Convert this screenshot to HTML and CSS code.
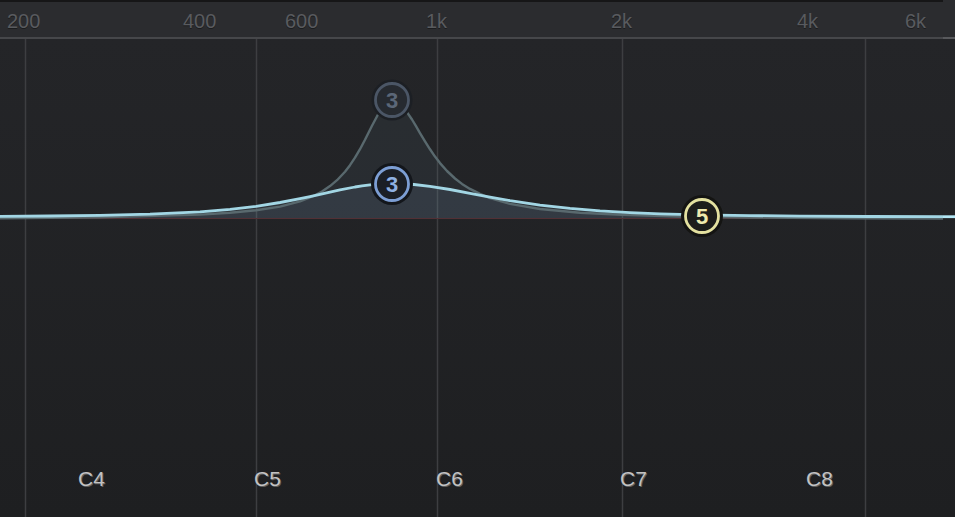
FILE: index.html
```html
<!DOCTYPE html>
<html>
<head>
<meta charset="utf-8">
<title>EQ</title>
<link rel="stylesheet" href="styles.css">
</head>
<body>
<div class="eq">
  <div class="freq-bar">
    <div class="freq-cap"></div>
    <div class="freq-labels">
      <span class="freq" style="left:7px">200</span>
      <span class="freq" style="left:183px">400</span>
      <span class="freq" style="left:285px">600</span>
      <span class="freq" style="left:426px">1k</span>
      <span class="freq" style="left:611px">2k</span>
      <span class="freq" style="left:797px">4k</span>
      <span class="freq" style="left:905px">6k</span>
    </div>
  </div>
  <div class="freq-rule"></div>
  <div class="plot">
    <svg class="graph" viewBox="0 39 955 478" width="955" height="478" xmlns="http://www.w3.org/2000/svg">
      <g class="grid">
        <line x1="25.5" y1="39" x2="25.5" y2="517"/>
        <line x1="256.5" y1="39" x2="256.5" y2="517"/>
        <line x1="437.5" y1="39" x2="437.5" y2="517"/>
        <line x1="622.5" y1="39" x2="622.5" y2="517"/>
        <line x1="865.5" y1="39" x2="865.5" y2="517"/>
      </g>
      <polygon class="ghost-fill" points="0,217.4 100,216.5 200,214.0 230,212.3 256,209.9 280,206.3 300,201.2 315,195.3 322,191.5 330,186.1 337,180.2 345,171.7 350,165.2 355,157.7 360,149.2 365,139.8 372,125.7 380,110.7 386,104 392,100 398,103 404,107.9 412,119.5 416,126.2 420,133.1 425,141.4 430,149.3 435,156.6 440,163.1 447,171 455,178.5 462,183.9 470,188.9 480,193.9 490,197.9 510,203.5 540,208.5 580,212.1 622,214.1 680,215.7 750,216.7 850,217.4 943,217.7 943,218 0,218"/>
      <polygon class="main-fill" points="0,216.4 50,216.0 100,215.4 150,214.2 200,211.8 230,209.4 256,206.3 280,202.5 300,198.7 310,196.6 320,194.3 330,192.1 340,189.9 355,187.0 362,185.9 370,184.8 382,183.8 392,183.5 402,183.7 414,184.5 430,186.3 450,189.5 470,193.3 490,197.1 510,200.6 540,205.1 570,208.4 600,210.9 630,212.6 660,213.8 700,214.8 750,215.6 800,216.1 870,216.5 943,216.7 943,218 0,218"/>
      <line class="zero" x1="0" y1="218.5" x2="943" y2="218.5"/>
      <polyline class="ghost-line" points="0,218.2 100,217.3 200,214.6 230,212.8 256,210.3 280,206.6 300,201.4 315,195.3 322,191.5 330,186.1 337,180.2 345,171.7 350,165.2 355,157.7 360,149.2 365,139.8 372,125.7 380,110.7 386,104 392,100 398,103 404,107.9 412,119.5 416,126.2 420,133.1 425,141.4 430,149.3 435,156.6 440,163.1 447,171 455,178.5 462,183.9 470,188.9 480,193.9 490,198.1 510,203.9 540,209.0 580,212.7 622,214.8 680,216.5 750,217.5 850,218.2 943,218.5"/>
      <polyline class="main-line" points="0,216.4 50,216.0 100,215.4 150,214.2 200,211.8 230,209.4 256,206.3 280,202.5 300,198.7 310,196.6 320,194.3 330,192.1 340,189.9 355,187.0 362,185.9 370,184.8 382,183.8 392,183.5 402,183.7 414,184.5 430,186.3 450,189.5 470,193.3 490,197.1 510,200.6 540,205.1 570,208.4 600,210.9 630,212.6 660,213.8 700,214.8 750,215.6 800,216.1 870,216.5 943,216.7"/>
      <line class="main-tail" x1="943" y1="216.7" x2="955" y2="216.7"/>

      <g class="node node-ghost">
        <circle class="halo" cx="392" cy="100" r="20.5"/>
        <circle class="ring" cx="392" cy="100" r="16.5"/>
        <text x="392" y="108">3</text>
      </g>
      <g class="node node-active">
        <circle class="halo" cx="392" cy="184" r="21"/>
        <circle class="ring" cx="392" cy="184" r="16.5"/>
        <text x="392" y="192">3</text>
      </g>
      <g class="node node-five">
        <circle class="halo" cx="702" cy="216" r="21"/>
        <circle class="ring" cx="702" cy="216" r="16.5"/>
        <text x="702" y="224">5</text>
      </g>
    </svg>
    <span class="note" style="left:78px">C4</span>
    <span class="note" style="left:254px">C5</span>
    <span class="note" style="left:436px">C6</span>
    <span class="note" style="left:620px">C7</span>
    <span class="note" style="left:806px">C8</span>
  </div>
</div>
</body>
</html>
```

FILE: styles.css
```css
html, body {
  margin: 0;
  padding: 0;
  background: #202124;
  overflow: hidden;
}

.eq {
  display: flex;
  flex-direction: column;
  width: 955px;
  height: 517px;
  font-family: "Liberation Sans", Arial, sans-serif;
}

.freq-bar {
  height: 37px;
  background: #2b2c2f;
  display: flex;
  flex-direction: column;
}

.freq-cap {
  height: 2px;
  margin-right: 12px;
  background: #161617;
}

.freq-labels {
  position: relative;
  flex: 1;
}

.freq {
  position: absolute;
  top: 9px;
  font-size: 20px;
  line-height: 20px;
  color: #595b5f;
  text-shadow: 0 1px 0 #1b1c1e;
}

.freq-rule {
  height: 2px;
  background: linear-gradient(to right, #46474a 943px, #58595c 943px);
}

.plot {
  position: relative;
  flex: 1;
  background: linear-gradient(#242528, #1e1f21);
}

.graph {
  position: absolute;
  left: 0;
  top: 0;
  display: block;
}

.grid line {
  stroke: #3d3e41;
  stroke-width: 1.5;
}

.ghost-fill {
  fill: rgba(120, 150, 180, 0.08);
}

.main-fill {
  fill: rgba(120, 150, 180, 0.14);
}

.zero {
  stroke: #523035;
  stroke-width: 1;
}

.ghost-line {
  fill: none;
  stroke: #59696e;
  stroke-width: 2.4;
  stroke-linejoin: round;
}

.main-line {
  fill: none;
  stroke: #a2d6e4;
  stroke-width: 2.8;
  stroke-linejoin: round;
}

.main-tail {
  stroke: #b2e6f4;
  stroke-width: 2.8;
}

.node text {
  font-family: "Liberation Sans", Arial, sans-serif;
  font-size: 22px;
  font-weight: bold;
  text-anchor: middle;
}

.node .ring {
  stroke-width: 2.8;
}

.node-ghost .halo { fill: #1c1f24; }
.node-ghost .ring { fill: #262a30; stroke: #4b5666; }
.node-ghost text { fill: #5b6778; }

.node-active .halo { fill: #13161b; }
.node-active .ring { fill: #1b1f26; stroke: #7c9ed4; }
.node-active text { fill: #8fb1e3; }

.node-five .halo { fill: #141412; }
.node-five .ring { fill: #1d1d1b; stroke: #e4e1a0; }
.node-five text { fill: #efe9ad; }

.note {
  position: absolute;
  top: 429px;
  font-size: 21px;
  line-height: 21px;
  color: #c2c2c2;
  text-shadow: 1px 1px 0 #5e5e5e;
}
```
